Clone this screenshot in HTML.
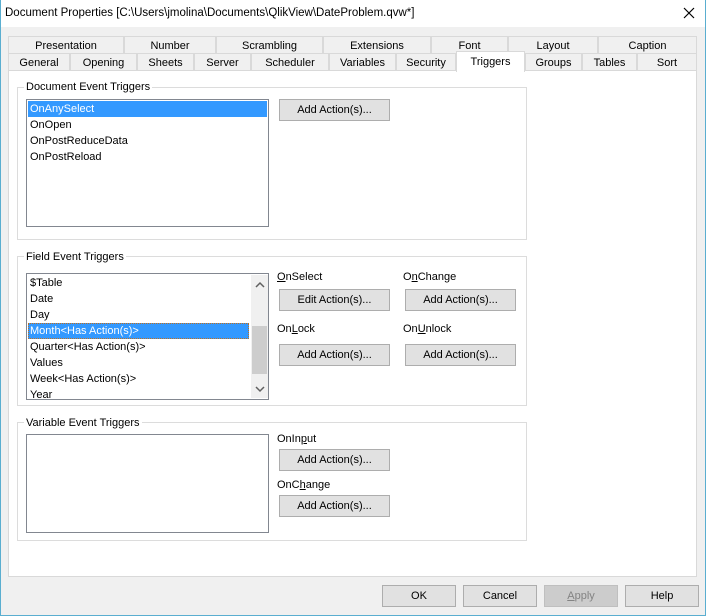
<!DOCTYPE html>
<html><head><style>
*{box-sizing:border-box;margin:0;padding:0}
body{width:706px;height:616px;background:#f0f0f0;font-family:"Liberation Sans",sans-serif;font-size:11px;color:#000;position:relative;overflow:hidden}
.a{position:absolute}
.win{left:0;top:0;width:706px;height:616px;border:1px solid #5aaed0;border-top:none}
.title{left:1px;top:0;width:704px;height:27px;background:#fff}
.tab{position:absolute;height:17px;border:1px solid #d9d9d9;border-bottom:none;background:#f0f0f0;text-align:center;line-height:18px;font-size:11px}
.sel{background:#fff;height:21px;top:51px;border-color:#d9d9d9;line-height:20px;z-index:2}
.page{left:8px;top:70px;width:689px;height:507px;background:#fff;border:1px solid #d9d9d9}
.grp{position:absolute;border:1px solid #dcdcdc}
.gl{position:absolute;background:#fff;padding:0 2px;font-size:11px;top:0}
.lb{position:absolute;border:1px solid #828790;background:#fff}
.it{position:absolute;left:3px;height:16px;line-height:17px;font-size:11px;white-space:nowrap}
.hi{background:#3399ff;color:#fff;left:1px;padding-left:2px}
.btn{position:absolute;width:111px;height:22px;background:#e1e1e1;border:1px solid #adadad;text-align:center;line-height:21px;font-size:11px}
.lab{position:absolute;font-size:11px}
.bb{position:absolute;top:585px;width:74px;height:22px;background:#e1e1e1;border:1px solid #adadad;text-align:center;line-height:21px;font-size:11px}
u{text-decoration:underline}
</style></head><body>
<div class="a win"></div>
<div class="a title"></div>
<div class="a" style="left:5px;top:7px;font-size:11.5px">Document Properties [C:\Users\jmolina\Documents\QlikView\DateProblem.qvw*]</div>
<svg class="a" style="left:683px;top:7px" width="12" height="12"><path d="M1 1L11 11M11 1L1 11" stroke="#000" stroke-width="1.2"/></svg>

<div class="tab" style="left:8px;top:36px;width:116px">Presentation</div>
<div class="tab" style="left:124px;top:36px;width:92px">Number</div>
<div class="tab" style="left:216px;top:36px;width:107px">Scrambling</div>
<div class="tab" style="left:323px;top:36px;width:108px">Extensions</div>
<div class="tab" style="left:431px;top:36px;width:77px">Font</div>
<div class="tab" style="left:508px;top:36px;width:90px">Layout</div>
<div class="tab" style="left:598px;top:36px;width:99px">Caption</div>
<div class="tab" style="left:8px;top:53px;width:62px">General</div>
<div class="tab" style="left:70px;top:53px;width:67px">Opening</div>
<div class="tab" style="left:137px;top:53px;width:57px">Sheets</div>
<div class="tab" style="left:194px;top:53px;width:57px">Server</div>
<div class="tab" style="left:251px;top:53px;width:78px">Scheduler</div>
<div class="tab" style="left:329px;top:53px;width:67px">Variables</div>
<div class="tab" style="left:396px;top:53px;width:60px">Security</div>
<div class="tab sel" style="left:456px;width:69px">Triggers</div>
<div class="tab" style="left:525px;top:53px;width:57px">Groups</div>
<div class="tab" style="left:582px;top:53px;width:55px">Tables</div>
<div class="tab" style="left:637px;top:53px;width:60px">Sort</div>
<div class="a page"></div>

<div class="grp" style="left:17px;top:87px;width:510px;height:153px"></div>
<div class="gl" style="left:24px;top:81px">Document Event Triggers</div>
<div class="lb" style="left:26px;top:99px;width:243px;height:128px">
<div class="it hi" style="top:1px;width:239px">OnAnySelect</div>
<div class="it" style="top:17px">OnOpen</div>
<div class="it" style="top:33px">OnPostReduceData</div>
<div class="it" style="top:49px">OnPostReload</div>
</div>
<div class="btn" style="left:279px;top:99px">Add Action(s)...</div>

<div class="grp" style="left:17px;top:256px;width:510px;height:150px"></div>
<div class="gl" style="left:24px;top:251px">Field Event Triggers</div>
<div class="lb" style="left:26px;top:273px;width:243px;height:127px;overflow:hidden">
<div class="it" style="top:1px">$Table</div>
<div class="it" style="top:17px">Date</div>
<div class="it" style="top:33px">Day</div>
<div class="it hi" style="top:49px;width:221px;outline:1px dotted #c07020;outline-offset:-1px">Month&lt;Has Action(s)&gt;</div>
<div class="it" style="top:65px">Quarter&lt;Has Action(s)&gt;</div>
<div class="it" style="top:81px">Values</div>
<div class="it" style="top:97px">Week&lt;Has Action(s)&gt;</div>
<div class="it" style="top:113px">Year</div>
<div class="a" style="left:224px;top:1px;width:17px;height:123px;background:#f0f0f0"></div>
<div class="a" style="left:225px;top:52px;width:15px;height:48px;background:#cdcdcd"></div>
<svg class="a" style="left:227px;top:7px" width="12" height="112"><path d="M2 6L6 2L10 6" fill="none" stroke="#606060" stroke-width="1.5"/><path d="M2 106L6 110L10 106" fill="none" stroke="#606060" stroke-width="1.5"/></svg>
</div>
<div class="lab" style="left:277px;top:271px"><u>O</u>nSelect</div>
<div class="lab" style="left:403px;top:271px">O<u>n</u>Change</div>
<div class="btn" style="left:279px;top:289px">Edit Action(s)...</div>
<div class="btn" style="left:405px;top:289px">Add Action(s)...</div>
<div class="lab" style="left:277px;top:323px">On<u>L</u>ock</div>
<div class="lab" style="left:403px;top:323px">On<u>U</u>nlock</div>
<div class="btn" style="left:279px;top:344px">Add Action(s)...</div>
<div class="btn" style="left:405px;top:344px">Add Action(s)...</div>

<div class="grp" style="left:17px;top:422px;width:510px;height:119px"></div>
<div class="gl" style="left:24px;top:417px">Variable Event Triggers</div>
<div class="lb" style="left:26px;top:434px;width:243px;height:99px"></div>
<div class="lab" style="left:277px;top:433px">OnIn<u>p</u>ut</div>
<div class="btn" style="left:279px;top:449px">Add Action(s)...</div>
<div class="lab" style="left:277px;top:479px">OnC<u>h</u>ange</div>
<div class="btn" style="left:279px;top:495px">Add Action(s)...</div>

<div class="bb" style="left:382px">OK</div>
<div class="bb" style="left:463px">Cancel</div>
<div class="bb" style="left:544px;background:#cccccc;border-color:#bfbfbf;color:#838383"><u>A</u>pply</div>
<div class="bb" style="left:625px">Help</div>
</body></html>
